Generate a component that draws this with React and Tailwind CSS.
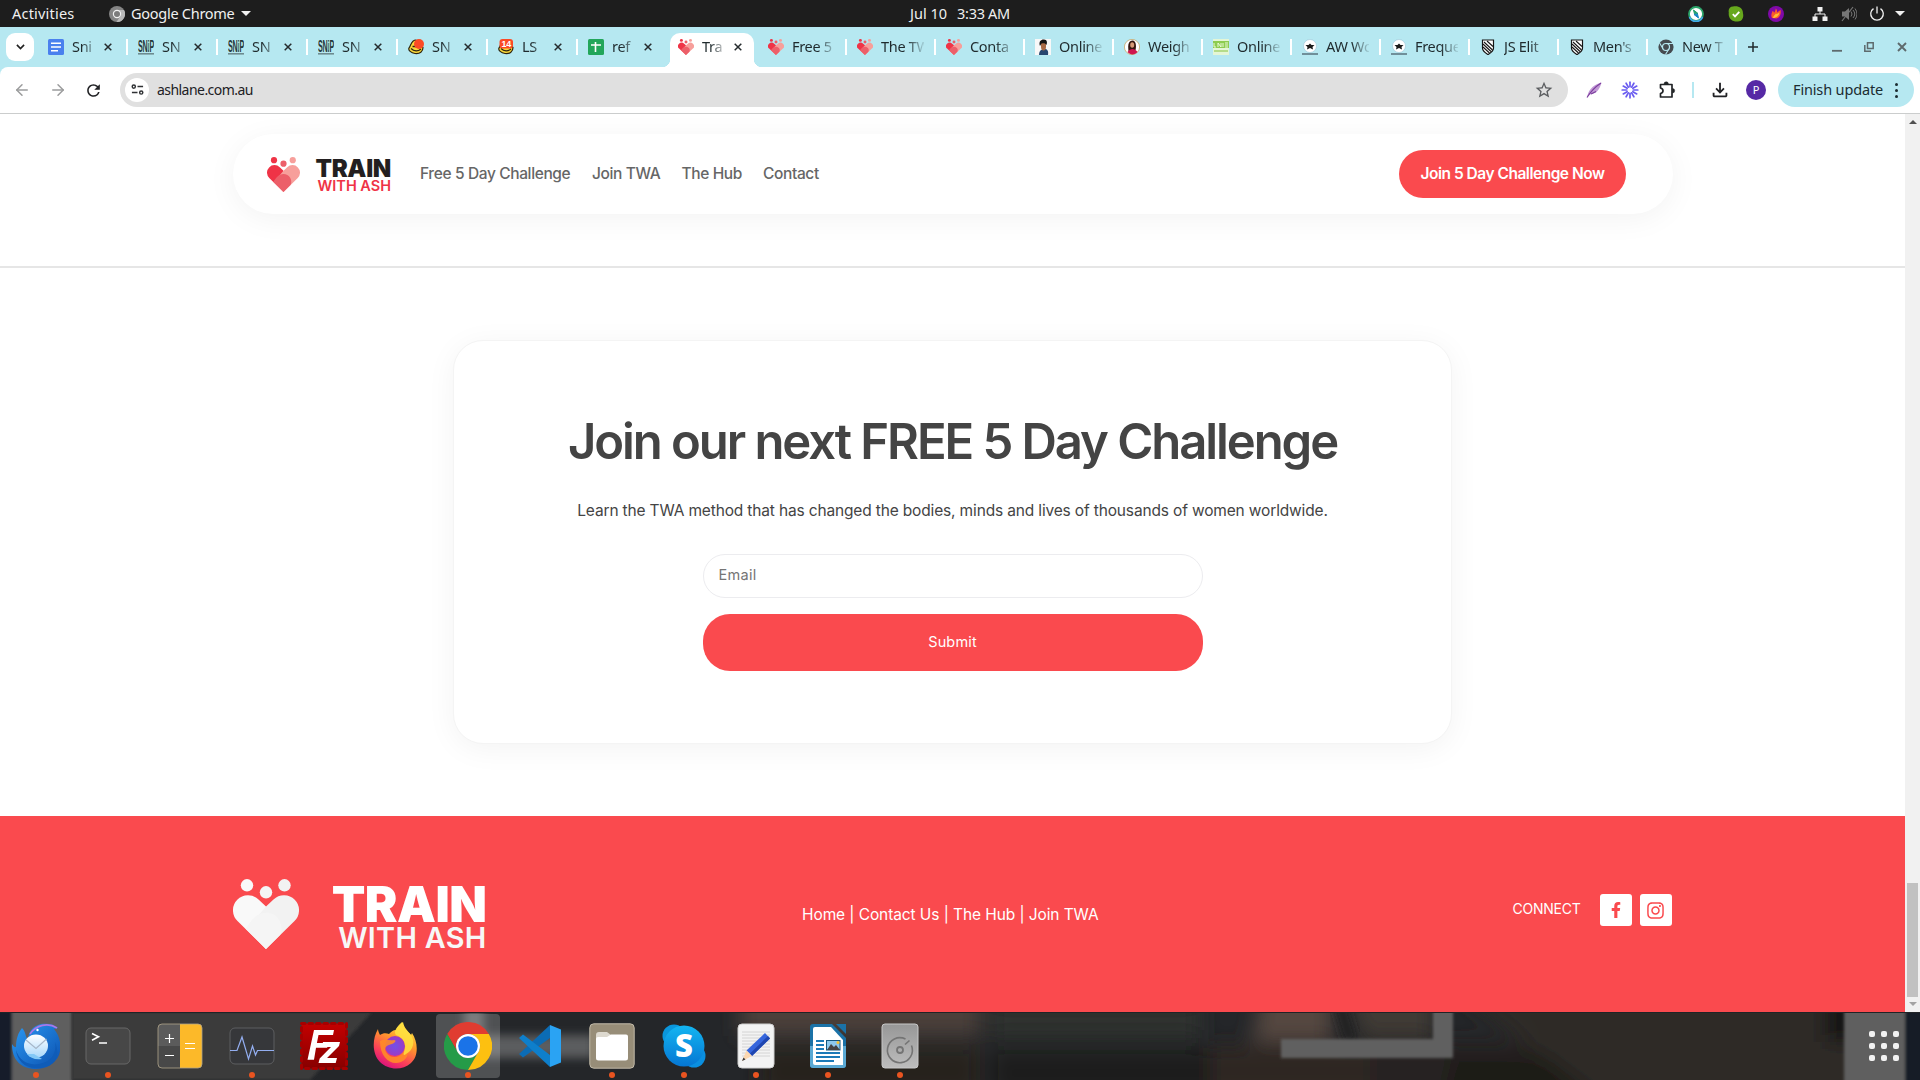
import React from "react";
import { LuArrowLeft, LuArrowRight } from "react-icons/lu";
import { MdRefresh, MdStarBorder, MdOutlineFileDownload } from "react-icons/md";
import { FaFacebookF, FaInstagram } from "react-icons/fa";

/* ---------- Small artwork ---------- */

function HeartLogo({ className, left = "#ef3346", right = "#f79f9b", mid = "#ec5f69" }) {
  return (
    <svg viewBox="0 0 66 70" preserveAspectRatio="none" className={className}>
      <circle cx="14" cy="6.3" r="6.2" fill={left} />
      <circle cx="33" cy="13.3" r="6.2" fill={mid} />
      <circle cx="51.5" cy="6.3" r="6.2" fill={right} />
      <path d="M33 27.5 25.500 20.500A15 15 0 0 0 4.500 42L33 70Z" fill={left} />
      <path d="M33 27.500 40.500 20.500A15 15 0 0 1 61.500 42L33 70 14 49.500Z" fill={right} />
      <path d="M33 70 12.500 49.500 19 41C27 31 41 32 46 41 50 48 48.500 53 47 56Z" fill={mid} />
    </svg>
  );
}

function DocsIcon() {
  return (
    <svg viewBox="0 0 16 16" className="size-4">
      <rect width="16" height="16" rx="1.500" fill="#4a80ee" />
      <path d="M3 4.300h10M3 8h10M3 11.700h7" stroke="#fff" strokeWidth="1.600" />
    </svg>
  );
}

function SheetsIcon() {
  return (
    <svg viewBox="0 0 16 16" className="size-4">
      <rect width="16" height="16" rx="1.500" fill="#22a65a" />
      <path d="M3 6h10M7.500 3v10" stroke="#fff" strokeWidth="1.600" />
    </svg>
  );
}

function SnipIcon() {
  return (
    <svg viewBox="0 0 16 16" className="size-4">
      <text x="0" y="12.500" textLength="16" lengthAdjust="spacingAndGlyphs" fontSize="16" fontWeight="700" fill="#26383a" fontFamily="Liberation Sans">SNiP</text>
      <path d="M0 14.800h16" stroke="#6d8b90" strokeWidth="1.600" />
      <path d="M10 2v9" stroke="#7fc9b4" strokeWidth=".8" />
    </svg>
  );
}

function Mailchimp({ badge }) {
  return (
    <svg viewBox="0 0 16 16" className="size-4">
      <path d="M8 1C3 1 3 7 1 9c-1 2 2 5 6 5.500 5 .6 8-2 8-6Z" fill="#f8d73a" stroke="#2c2410" strokeWidth="1.200" />
      <path d="M3 9.500c3 3 7 3 10 .5M4.500 7.500h5" stroke="#2c2410" strokeWidth="1.300" fill="none" />
      {badge ? (
        <>
          <rect x="1.500" y="0" width="13.500" height="9.500" rx="3" fill="#fb4a26" />
          <text x="8.200" y="8" textAnchor="middle" fontSize="9" fontWeight="700" fill="#fff" fontFamily="Liberation Sans">14</text>
        </>
      ) : (
        <circle cx="11" cy="5" r="5" fill="#fb4a26" />
      )}
    </svg>
  );
}

function PortraitIcon() {
  return (
    <svg viewBox="0 0 16 16" className="size-4">
      <rect width="16" height="16" fill="#f8f8f8" />
      <path d="M4 16c0-3 1-4.500 3-5.500l4-.5c2 1 2.500 3 2 6Z" fill="#27466f" />
      <path d="M6 4h5v4c0 2-1 3.500-2.500 3.500S6 10 6 8Z" fill="#a86a45" />
      <path d="M5 7C3 2 7 0 9 .5c3 0 3.500 3 2.500 5.500-1-2-3-2-5-1.500Z" fill="#151515" />
    </svg>
  );
}

function WomanIcon() {
  return (
    <svg viewBox="0 0 16 16" className="size-4">
      <circle cx="8" cy="8" r="7.600" fill="#fff" stroke="#c89c55" strokeWidth=".7" />
      <path d="M4.500 12C3.500 5 5 1.500 8.500 1.500S12.500 7 11.500 11Z" fill="#35170f" />
      <ellipse cx="8.200" cy="6" rx="2" ry="2.800" fill="#d79b77" />
      <path d="M3.500 13C6 9 11 9 13.500 13 11 16.200 6 16.200 3.500 13Z" fill="#cf164f" />
    </svg>
  );
}

function GreenIcon() {
  return (
    <svg viewBox="0 0 16 16" className="size-4">
      <rect width="16" height="16" fill="#e4f6d6" />
      <rect y="2" width="16" height="7" fill="#8dcc4f" />
      <path d="M1 4v4h2M5 8V4l3 4V4M10 4v4M12 4h3M12 6h3M12 8h3" stroke="#f3ffe4" strokeWidth=".9" fill="none" />
      <path d="M1 12h14" stroke="#b5dc8a" strokeWidth="2" />
    </svg>
  );
}

function AwIcon() {
  return (
    <svg viewBox="0 0 16 16" className="size-4">
      <circle cx="8" cy="7" r="6.500" fill="#fff" stroke="#9cc4d9" strokeWidth=".6" />
      <path d="M3.500 6 6.500 6 8 4.500l1.500 1.500h3L10.500 8l.5 2.500L8 9l-3 1.500.5-2.500Z" fill="#1a1a1a" />
      <path d="M0 15h16" stroke="#4b5f6b" strokeWidth="1.300" />
    </svg>
  );
}

function ShieldIcon() {
  return (
    <svg viewBox="0 0 16 16" className="size-4">
      <path d="M2.500 1h11v8c0 3.500-3 5-5.500 6.500C5.500 14 2.500 12.500 2.500 9Z" fill="#fff" stroke="#151515" strokeWidth="1.200" />
      <path d="m4 3 8.500 8M7 2l6 5.500M3 5l8 7.500M3 8l6.500 6" stroke="#151515" strokeWidth="1.100" />
    </svg>
  );
}

function ChromeMono({ className, fg = "#454b50", bg = "#b6e8f1" }) {
  return (
    <svg viewBox="0 0 16 16" className={className}>
      <circle cx="8" cy="8" r="7.600" fill={fg} />
      <circle cx="8" cy="8" r="3.500" fill={fg} stroke={bg} strokeWidth="1.200" />
      <path d="M8 4.500h7M5 9.800 1.600 4M11 9.800 7.500 15.500" stroke={bg} strokeWidth="1.100" />
    </svg>
  );
}

function TopBarChrome() {
  return (
    <svg viewBox="0 0 16 16" className="size-4">
      <circle cx="8" cy="8" r="8" fill="#858585" />
      <path d="M8 4h7a8 8 0 0 1-7.500 12L11.500 10Z" fill="#b9b9b9" />
      <circle cx="8" cy="8" r="3.600" fill="#7c7c7c" stroke="#f2f2f2" strokeWidth="1.200" />
    </svg>
  );
}

function Burst() {
  const rays = [0, 30, 60, 90, 120, 150, 180, 210, 240, 270, 300, 330];
  return (
    <svg viewBox="0 0 18 18" className="size-[18px]">
      {rays.map((r) => (
        <path key={r} d="M9 1.200v4.500" stroke="#6a5cf0" strokeWidth="1.700" strokeLinecap="round" transform={`rotate(${r} 9 9)`} />
      ))}
    </svg>
  );
}

function Feather() {
  return (
    <svg viewBox="0 0 16 16" className="size-4">
      <path d="M1 15.500C2 10 5 3 15.500.5 14 7 10.500 12 4 12.500Z" fill="#c29ad6" />
      <path d="M1 15.500C5 9 9 5 15 1M5 12l5-2.500" stroke="#7a3c9c" strokeWidth="1.100" fill="none" />
    </svg>
  );
}

function Caret() {
  return <span className="h-0 w-0 border-x-[5px] border-t-[5px] border-x-transparent border-t-[#f0f0f0]" />;
}

/* ---------- Desktop top bar ---------- */

function TopBar() {
  return (
    <header className="relative flex h-[27px] items-center bg-[#1d1d1d] pl-3 font-['Noto_Sans',sans-serif] text-[14.500px] text-[#f0f0f0]">
      <span className="w-[97px] tracking-[0.200px]">Activities</span>
      <TopBarChrome />
      <span className="ml-[6px] mr-[6px] tracking-[-0.270px]">Google Chrome</span>
      <Caret />
      <div className="absolute inset-x-0 flex justify-center gap-[10px]">
        <span>Jul 10</span>
        <span className="tracking-[-0.300px]">3:33 AM</span>
      </div>
      <div className="ml-auto flex items-center pr-[15px]">
        <svg viewBox="0 0 16 16" className="mr-6 size-4">
          <circle cx="8" cy="8" r="7" fill="#fff" stroke="#2ba56a" strokeWidth="1.800" />
          <path d="M1.500 11A7 7 0 0 0 14.500 11" stroke="#42a7e8" strokeWidth="1.800" fill="none" />
          <path d="m5.500 4 4.500 3.500-3.500.5Z" fill="#23a06c" stroke="#23a06c" />
          <path d="M10.500 12 6 8.500 9.500 8Z" fill="#1685c4" stroke="#1685c4" />
        </svg>
        <svg viewBox="0 0 16 16" className="mr-6 size-4">
          <path d="M5 .5c5-1 10 1 10 7 1 4-1 8-5 8C4 16 0 12 .8 6.500 0 3 2 .5 5 .5Z" fill="#67a81d" />
          <path d="m4.800 8.200 2.200 2.200 4.300-4.600" stroke="#fff" strokeWidth="1.800" fill="none" />
        </svg>
        <svg viewBox="0 0 16 16" className="mr-[28px] size-4">
          <circle cx="8" cy="8" r="8" fill="#8009a8" />
          <path d="M4 12C2.500 9 4 7 4.500 5c1 0 1.500 1 1.500 2 1-1 1.500-3 1.800-4.500C9.500 4 9 5.500 9 6.500L12.500 4c1 4-1 8-4 8.500Z" fill="#fb5a2c" />
          <path d="M5 12c0-2 2-3 3-4.500.5 1 2 0 3.500-1-.5 3-3 5.500-6.500 5.500Z" fill="#ffc02f" />
        </svg>
        <svg viewBox="0 0 16 16" className="mr-[13px] size-4" fill="#f0f0f0">
          <path d="M5.500 1h5v4.500h-5zM.5 10.500h5V15h-5zM10.500 10.500h5V15h-5z" />
          <path d="M8 5v3M3 11V8h10v3" stroke="#f0f0f0" fill="none" />
        </svg>
        <svg viewBox="0 0 16 16" className="mr-[12px] size-4">
          <path d="M1 5.500h3L8 2v12L4 10.500H1Z" fill="#777" />
          <path d="M10 5.500q2 2.500 0 5M12 4q3.500 4 0 8M14 2.500q4 5.500 0 11" stroke="#777" fill="none" />
          <path d="M1 15 12 1" stroke="#777" strokeWidth="1.200" />
        </svg>
        <svg viewBox="0 0 16 16" className="mr-[10px] size-4" fill="none" stroke="#f0f0f0" strokeWidth="1.300">
          <path d="M4.500 2.600a6.300 6.300 0 1 0 7 0M8 .5v7" />
        </svg>
        <Caret />
      </div>
    </header>
  );
}

/* ---------- Browser tabs ---------- */

const heart = <HeartLogo className="size-4" />;

const pinnedTabs = [
  { title: "Sni", icon: <DocsIcon /> },
  { title: "SN", icon: <SnipIcon /> },
  { title: "SN", icon: <SnipIcon /> },
  { title: "SN", icon: <SnipIcon /> },
  { title: "SN", icon: <Mailchimp /> },
  { title: "LS", icon: <Mailchimp badge /> },
  { title: "ref", icon: <SheetsIcon /> },
];

const otherTabs = [
  { title: "Free 5", icon: heart },
  { title: "The TW", icon: heart },
  { title: "Conta", icon: heart },
  { title: "Online", icon: <PortraitIcon /> },
  { title: "Weigh", icon: <WomanIcon /> },
  { title: "Online", icon: <GreenIcon /> },
  { title: "AW Wo", icon: <AwIcon /> },
  { title: "Freque", icon: <AwIcon /> },
  { title: "JS Elit", icon: <ShieldIcon /> },
  { title: "Men's", icon: <ShieldIcon /> },
  { title: "New T", icon: <ChromeMono className="size-4" /> },
];

function CloseX() {
  return (
    <svg viewBox="0 0 8 8" className="size-2 shrink-0">
      <path d="m.7.7 6.600 6.600M7.300.7.7 7.300" stroke="#252b2d" strokeWidth="1.500" />
    </svg>
  );
}

function PinnedTab({ tab, last }) {
  return (
    <div className="flex h-10 w-[90px] shrink-0 items-center pl-[10px]">
      {tab.icon}
      <span className="ml-2 w-[21px] shrink-0 overflow-hidden [mask-image:linear-gradient(to_right,#000_45%,transparent_130%)] whitespace-nowrap">{tab.title}</span>
      <span className="ml-[11px] flex"><CloseX /></span>
      {!last && <span className="ml-[14px] h-4 w-[2px] bg-white" />}
    </div>
  );
}

function ActiveTab() {
  return (
    <div className="flex h-10 w-[90px] shrink-0 items-end">
      <div className="relative ml-[2px] flex h-[34px] w-[84px] items-center rounded-t-[10px] bg-white pb-[6px] pl-2">
        <span className="absolute bottom-0 -left-2 size-2 bg-[radial-gradient(circle_at_0_0,transparent_8px,white_8.500px)]" />
        <span className="absolute -right-2 bottom-0 size-2 bg-[radial-gradient(circle_at_100%_0,transparent_8px,white_8.500px)]" />
        {heart}
        <span className="ml-2 w-[21px] overflow-hidden [mask-image:linear-gradient(to_right,#000_40%,transparent_120%)] whitespace-nowrap">Tra</span>
        <span className="ml-[11px] flex"><CloseX /></span>
      </div>
    </div>
  );
}

function TabStrip() {
  return (
    <div className="flex h-10 items-center bg-[#b6e8f1] pl-[6px] font-['Noto_Sans',sans-serif] text-[14.500px] tracking-[-0.300px] text-[#1f2a2d]">
      <div className="mr-1 flex h-7 w-7 items-center justify-center rounded-[9px] bg-white">
        <svg viewBox="0 0 10 6" className="w-[9px]"><path d="m1 1 4 4 4-4" stroke="#202020" strokeWidth="1.800" fill="none" /></svg>
      </div>
      {pinnedTabs.map((t, i) => <PinnedTab key={i} tab={t} last={i === 6} />)}
      <ActiveTab />
      {otherTabs.map((t, i) => (
        <div key={i} className="flex h-10 w-[89px] shrink-0 items-center pl-[10px]">
          {t.icon}
          <span className="ml-2 w-[43px] shrink-0 overflow-hidden [mask-image:linear-gradient(to_right,#000_60%,transparent_105%)] whitespace-nowrap">{t.title}</span>
          <span className="ml-[10px] h-4 w-[2px] bg-white" />
        </div>
      ))}
      <svg viewBox="0 0 10 10" className="ml-[11px] size-[10px]"><path d="M5 0v10M0 5h10" stroke="#202a2c" strokeWidth="1.500" /></svg>
      <div className="ml-auto flex items-center pr-[13px] text-[#5e6a6d]">
        <svg viewBox="0 0 10 10" className="mr-[22px] size-[10px]"><path d="M0 8.800h10" stroke="currentColor" strokeWidth="1.800" /></svg>
        <svg viewBox="0 0 10 10" className="mr-[23px] size-[10px]" fill="none" stroke="currentColor" strokeWidth="1.500"><path d="M3.500.8h5.700v5.700H3.500zM.8 3v6.200H7" /></svg>
        <svg viewBox="0 0 10 10" className="size-[10px]"><path d="m1 1 8 8M9 1 1 9" stroke="currentColor" strokeWidth="1.900" /></svg>
      </div>
    </div>
  );
}

function Toolbar() {
  return (
    <div className="bg-[#b6e8f1]">
      <div className="flex h-[47px] items-center rounded-t-lg border-b border-[#cbcdcd] bg-white pl-[14px] font-['Noto_Sans',sans-serif] text-[#202124]">
        <LuArrowLeft className="size-[18px] -translate-x-px text-[#9b9c9d]" />
        <LuArrowRight className="ml-[17px] size-[18px] text-[#9b9c9d]" />
        <MdRefresh className="ml-[17px] size-[19px]" />
        <div className="ml-[17px] flex h-[34px] w-[1448px] items-center rounded-full bg-[#e0e0e0] pr-[15px] pl-[5px]">
          <span className="flex size-6 items-center justify-center rounded-full bg-white">
            <svg viewBox="0 0 14 12" className="w-[13px]" fill="none" stroke="#303235" strokeWidth="1.600">
              <circle cx="3" cy="2.800" r="1.700" /><path d="M7 2.800h6M1 9.200h6" /><circle cx="11" cy="9.200" r="1.700" />
            </svg>
          </span>
          <span className="mb-px ml-2 text-[14px] leading-[18px] tracking-[-0.550px]">ashlane.com.au</span>
          <MdStarBorder className="ml-auto size-5 -mr-px text-[#5b5d60]" />
        </div>
        <span className="ml-[18px]"><Feather /></span>
        <span className="ml-[19px]"><Burst /></span>
        <svg viewBox="0 0 18 18" className="ml-[19px] size-[18px]" fill="none" stroke="#222427" strokeWidth="1.700">
          <path d="M2.500 3.500H14V16H2.500v-3.500q2.500-.5 2.500-2.700T2.500 7Z" strokeLinejoin="round" />
          <path d="M6 3a2.200 2.200 0 0 1 4.400 0ZM14.500 7.500a2.200 2.200 0 0 1 0 4.400Z" fill="#222427" strokeWidth=".5" />
        </svg>
        <span className="ml-[16px] h-4 w-[2px] bg-[#b6e8f1]" />
        <MdOutlineFileDownload className="ml-[15px] size-[22px]" />
        <span className="ml-[15px] flex size-5 items-center justify-center rounded-full bg-[#5629a5] text-[11px] text-white">P</span>
        <div className="ml-3 flex h-[34px] w-[136px] items-center rounded-full bg-[#b6e8f1] pl-[15px] text-[14.500px] tracking-[-0.150px] text-[#1b2c31]">
          Finish update
          <span className="ml-[12px] flex flex-col gap-[3px]">
            {[0, 1, 2].map((i) => <span key={i} className="size-[3px] rounded-full bg-[#1b2c31]" />)}
          </span>
        </div>
      </div>
    </div>
  );
}

/* ---------- Web page ---------- */

function SiteNav() {
  return (
    <nav className="mx-auto mt-5 flex h-20 w-[1440px] items-center rounded-full bg-white pr-[46.500px] pl-[34.500px] text-[15.500px] font-medium tracking-[-0.370px] text-[#666] shadow-[0_5px_30px_rgba(0,0,0,0.05)]">
      <HeartLogo className="h-[35px] w-[33px]" />
      <div className="ml-[15px] flex w-[76px] flex-col items-end whitespace-nowrap">
        <span className="h-[21px] text-[24px] leading-[24px] font-black tracking-[-0.300px] text-[#231f20]">TRAIN</span>
        <span className="h-[14px] text-[14.500px] leading-[15px] font-semibold tracking-[0px] text-[#ef3346]">WITH ASH</span>
      </div>
      <span className="ml-[29px] w-[172px]">Free 5 Day Challenge</span>
      <span className="w-[89.500px]">Join TWA</span>
      <span className="w-[81.500px]">The Hub</span>
      <span>Contact</span>
      <button className="ml-auto h-12 w-[227px] rounded-[24px] bg-[#fa4a4e] font-semibold tracking-[-0.490px] text-white">Join 5 Day Challenge Now</button>
    </nav>
  );
}

function SignupCard() {
  return (
    <section className="mx-auto mt-[72px] flex h-[404px] w-[999px] flex-col items-center rounded-[30px] border border-[#f4f4f4] bg-white pt-[71px] text-[#444] shadow-[0_5px_30px_rgba(0,0,0,0.05)]">
      <h1 className="h-[58px] text-[49px] leading-[59px] font-semibold tracking-[-2.060px] whitespace-nowrap">Join our next FREE 5 Day Challenge</h1>
      <p className="mt-[29px] h-6 text-[15.500px] leading-6 tracking-[-0.155px] whitespace-nowrap">
        Learn the TWA method that has changed the bodies, minds and lives of thousands of women worldwide.
      </p>
      <div className="mt-[31px] flex h-[44px] w-[500px] items-center rounded-full border border-[#ececef] pb-[3px] pl-[15px] text-[14.500px] tracking-[0.300px] text-[#757575]">Email</div>
      <button className="mt-4 h-[57px] w-[500px] rounded-[27px] bg-[#fa4a4e] pb-px text-[14.500px] tracking-[0.150px] text-white">Submit</button>
    </section>
  );
}

function Footer() {
  return (
    <footer className="mt-[72px] h-[196px] bg-[#fa4a4e] text-white">
      <div className="mx-auto flex w-[1440px]">
        <HeartLogo className="mt-[62.500px] h-[70px] w-[66px]" left="#f9f9f9" right="#f2f2f2" mid="#f5f5f5" />
        <div className="mt-[68px] ml-[32px] flex w-[156px] flex-col items-end whitespace-nowrap">
          <span className="h-[40px] text-[49px] leading-[41px] font-black tracking-[-0.500px]">TRAIN</span>
          <span className="h-[28px] text-[28.800px] leading-[27px] font-semibold tracking-[0.300px] text-[#f7f7f7]">WITH ASH</span>
        </div>
        <p className="mt-[87px] ml-[315.500px] w-[710.500px] text-[15.500px] leading-6 tracking-[-0.090px]">Home | Contact Us | The Hub | Join TWA</p>
        <span className="mt-[81px] w-[87px] text-[14px] leading-6 tracking-[-0.250px]">CONNECT</span>
        <span className="mt-[78px] flex size-8 shrink-0 items-center justify-center rounded-[3px] bg-white text-[#fa4a4e]"><FaFacebookF className="size-[16px]" /></span>
        <span className="mt-[78px] ml-2 flex size-8 shrink-0 items-center justify-center rounded-[3px] bg-white text-[#fa4a4e]"><FaInstagram className="size-[19px]" /></span>
      </div>
    </footer>
  );
}

function ScrollBar() {
  return (
    <div className="flex w-[15px] flex-col items-center bg-[#f1f1f1]">
      <span className="mt-[6px] border-x-[4px] border-b-[4px] border-x-transparent border-b-[#505050]" />
      <span className="mt-[759px] h-[114px] w-[11px] bg-[#c1c1c1]" />
      <span className="mt-[5px] border-x-[4px] border-t-[4px] border-x-transparent border-t-[#a3a3a3]" />
    </div>
  );
}

/* ---------- Dock icons ---------- */

function Thunderbird() {
  return (
    <svg viewBox="0 0 48 48" className="size-12">
      <defs>
        <linearGradient id="tb" x1="0" y1="0" x2="1" y2="1"><stop offset="0" stopColor="#2b9bf4" /><stop offset="1" stopColor="#0b4fae" /></linearGradient>
        <linearGradient id="env" x1="0" y1="0" x2="0" y2="1"><stop offset="0" stopColor="#fff" /><stop offset="1" stopColor="#a9d8fb" /></linearGradient>
      </defs>
      <path d="M10 6c4 4 3 8 6 12 0-8 5-14 13-16 7-1 13 0 17 4l-4 1c6 7 8 17 5 26-4 9-13 14-23 14C9 47 0 38 0 22c2 3 3 3 4 3 0-8 2-14 6-19Z" fill="url(#tb)" />
      <path d="M18 12C24 3 36 0 45 6" fill="none" stroke="#a978e8" strokeWidth="1.600" />
      <path d="M4 28c3 10 12 16 23 14C40 40 45 30 43 20 50 36 40 47 24 46 12 46 5 38 4 28Z" fill="#0f5cb8" />
      <ellipse cx="24" cy="24" rx="12" ry="11.500" fill="url(#env)" />
      <path d="m14 18 10 8.500L34.500 17" fill="none" stroke="#a6b6c8" strokeWidth="1.100" />
      <path d="M15 32c3 4 8 6 15 5l-8-5Z" fill="#82c8f7" />
      <circle cx="25.500" cy="8" r="1.200" fill="#fff" />
    </svg>
  );
}

function Terminal() {
  return (
    <svg viewBox="0 0 46 38" className="h-[38px] w-[46px]">
      <rect x="1" y="1" width="44" height="36" rx="5" fill="#474747" stroke="#686868" />
      <path d="m7 6.500 6.500 3.300-6.500 3.400M14 16h8" stroke="#fff" strokeWidth="1.600" fill="none" />
    </svg>
  );
}

function Calculator() {
  return (
    <svg viewBox="0 0 46 46" className="size-[46px]">
      <rect x="1" y="1" width="44" height="44" rx="4" fill="#5b5b5b" />
      <path d="M1 23h22v22H5a4 4 0 0 1-4-4Z" fill="#484848" />
      <path d="M23 1h18a4 4 0 0 1 4 4v36a4 4 0 0 1-4 4H23Z" fill="#fcb929" />
      <rect x="1" y="1" width="44" height="44" rx="4" fill="none" stroke="#b0a58a" strokeWidth=".8" />
      <path d="M8 15.500h9M12.500 11v9M8 32.500h9M28 20.500h10M28 25.500h10" stroke="#fff" strokeWidth="1.200" />
    </svg>
  );
}

function Monitor() {
  return (
    <svg viewBox="0 0 46 38" className="h-[38px] w-[46px]">
      <rect x="1" y="1" width="44" height="36" rx="5" fill="#36373a" stroke="#5d5e60" />
      <path d="M1 23.500h7l5-13.500 6.500 22 4-13 3 9 2-4.500H45" fill="none" stroke="#93aef0" strokeWidth="1.200" />
    </svg>
  );
}

function FileZilla() {
  return (
    <svg viewBox="0 0 48 48" className="size-12">
      <defs><linearGradient id="fz" x1="0" y1="0" x2="0" y2="1"><stop offset="0" stopColor="#c40000" /><stop offset="1" stopColor="#870000" /></linearGradient></defs>
      <rect x="1.500" y="1.500" width="45" height="45" fill="url(#fz)" />
      <rect x="1.500" y="1.500" width="45" height="45" fill="none" stroke="#a50000" strokeWidth="3" strokeDasharray="3.500 4" strokeLinecap="round" />
      <path d="M14 8h20l-1 5H18.500l-1.600 8H28l-.8 4.800H16l-2 12H7.500Z" fill="#fff" />
      <path d="M23 20h17l-1 4-12 12h10l-1.300 5H18.500l1.200-4.500L31 25h-9Z" fill="#fff" />
    </svg>
  );
}

function Firefox() {
  return (
    <svg viewBox="0 0 48 48" className="size-12">
      <defs>
        <linearGradient id="ff" x1=".8" y1="0" x2=".3" y2="1"><stop offset="0" stopColor="#fff14a" /><stop offset=".4" stopColor="#ff9a2a" /><stop offset=".75" stopColor="#fb3d5a" /><stop offset="1" stopColor="#d7107f" /></linearGradient>
        <radialGradient id="ffp"><stop offset="0" stopColor="#7250e8" /><stop offset="1" stopColor="#9c3bc4" /></radialGradient>
      </defs>
      <path d="M6 7c0 2 1 4 2 6 3-2 6-2 9-1 2-2 4-4 7-4 1-3 4-6 7-8 1 6 5 9 8 13l1-2c6 9 7 23-1 30-9 8-23 7-31-1C0 32 0 17 6 7Z" fill="url(#ff)" />
      <circle cx="23" cy="24" r="10" fill="url(#ffp)" />
      <path d="M8 19c5-3 9 0 14-1 3 0 1 3-2 4-3 1-6 1-7 5 1 6 8 10 14 7 5-2 8-8 5-13 6 6 5 16-3 19-10 4-21-4-21-21Z" fill="#ff8b28" opacity=".9" />
      <path d="M30 0c-5 5-9 9-6 13 8 3 11 9 8 17-1 3 0 4 2 2 8-4 9-13 5-19-4-5-8-7-9-13Z" fill="#ffe23f" opacity=".85" />
    </svg>
  );
}

function Chrome() {
  return (
    <svg viewBox="0 0 48 48" className="size-12">
      <path d="M3.200 12A24 24 0 0 1 44.800 12H24a12 12 0 0 0-10.400 18Z" fill="#e03c31" />
      <path d="M3.200 12 13.600 30a12 12 0 0 0 20.800 0L24 48A24 24 0 0 1 3.200 12Z" fill="#259b48" />
      <path d="M24 12h20.800A24 24 0 0 1 24 48l10.400-18A12 12 0 0 0 24 12Z" fill="#fdc010" />
      <circle cx="24" cy="24" r="12" fill="#fff" />
      <circle cx="24" cy="24" r="9.800" fill="#1a73e8" />
    </svg>
  );
}

function VsCode() {
  return (
    <svg viewBox="0 0 44 44" className="size-[44px]">
      <path d="M1 30 5 33.500 32 14V1Z" fill="#0b6cb5" />
      <path d="M1 14 5 10.500 32 31v12Z" fill="#0e7fcb" />
      <path d="M32 1 43 5.500v33L32 43Z" fill="#2aa3f3" />
    </svg>
  );
}

function Files() {
  return (
    <svg viewBox="0 0 46 46" className="size-[46px]">
      <rect x=".8" y=".8" width="44.400" height="44.400" rx="4" fill="#978d78" stroke="#c0b9a8" />
      <path d="M7 12a3 3 0 0 1 3-3h8l4 3h14v8H7Z" fill="#ddd9cf" />
      <path d="M7 16q0-2 2-2h9l4-2.500h15q2 0 2 2V35q0 2.500-2.500 2.500h-27Q7 37.500 7 35Z" fill="#fff" />
    </svg>
  );
}

function Skype() {
  return (
    <svg viewBox="0 0 44 44" className="size-[44px]">
      <defs><linearGradient id="sk" x1="0" y1="0" x2="0" y2="1"><stop offset="0" stopColor="#13b5f1" /><stop offset="1" stopColor="#0576d3" /></linearGradient></defs>
      <circle cx="12" cy="12" r="11.500" fill="#0a96dc" />
      <circle cx="32" cy="32" r="11.500" fill="#0a8fe0" />
      <circle cx="22" cy="22" r="20.500" fill="url(#sk)" />
      <text x="22" y="32.500" textAnchor="middle" fontSize="31" fontWeight="800" fill="#fff" fontFamily="Open Sans">S</text>
    </svg>
  );
}

function Editor() {
  return (
    <svg viewBox="0 0 38 46" className="h-[46px] w-[38px]">
      <rect x="1" y="1" width="36" height="44" rx="4" fill="#f3f3f3" stroke="#d0d0d0" />
      <path d="M5 9h28M5 12h28M5 15h28M5 18h28M5 21h28M5 24h28M5 27h28M5 30h28M5 33h28" stroke="#ccc" strokeWidth=".8" />
      <path d="M28 10 33 15.500 15 33l-5.500-5.500Z" fill="#3565dc" />
      <path d="m31 13 2 2.500L15 33l-2-2.500Z" fill="#1f46b0" />
      <path d="M9.500 27.500 15 33 5 38Z" fill="#fbd7b0" />
      <path d="m6.500 34.500 2 2L5 38Z" fill="#3a3a3a" />
    </svg>
  );
}

function Writer() {
  return (
    <svg viewBox="0 0 38 46" className="h-[46px] w-[38px]">
      <path d="M4 1h19l14 14v27q0 3-3 3H4q-3 0-3-3V4q0-3 3-3Z" fill="#1b72a7" />
      <path d="M1 23h36v19q0 3-3 3H4q-3 0-3-3Z" fill="#5aa9d4" />
      <path d="M6 4h16l12 13v25H6q-2 0-2-2V6q0-2 2-2Z" fill="#fff" />
      <path d="M27 1h10v10Z" fill="#1b72a7" />
      <path d="M7 18h8M7 22h8M7 26h8M7 30h24M7 34h24M7 38h18" stroke="#1c7ab8" strokeWidth="1.900" />
      <rect x="17.500" y="17.500" width="13.500" height="9.500" fill="#8cc9ee" stroke="#15587f" />
      <path d="m18 27 4-6 3 3 2-2 4 5Z" fill="#444" /><circle cx="29" cy="19.500" r="1.500" fill="#f6c431" />
    </svg>
  );
}

function Disks() {
  return (
    <svg viewBox="0 0 38 46" className="h-[46px] w-[38px]">
      <defs><linearGradient id="dk" x1="0" y1="0" x2="0" y2="1"><stop offset="0" stopColor="#979797" /><stop offset="1" stopColor="#bdbdbd" /></linearGradient></defs>
      <rect x="1" y="1" width="36" height="44" rx="3" fill="url(#dk)" stroke="#c8c8c8" />
      <path d="M24.500 16a12.500 12.500 0 1 0 6 6.500M24 21.500l4.500-4" fill="none" stroke="#747474" strokeWidth="1.600" />
      <circle cx="19" cy="27" r="3" fill="none" stroke="#747474" strokeWidth="1.800" />
    </svg>
  );
}

const dockApps = [
  { icon: <Thunderbird />, running: true },
  { icon: <Terminal />, running: true },
  { icon: <Calculator /> },
  { icon: <Monitor />, running: true },
  { icon: <FileZilla /> },
  { icon: <Firefox /> },
  { icon: <Chrome />, running: true, active: true },
  { icon: <VsCode /> },
  { icon: <Files />, running: true },
  { icon: <Skype />, running: true },
  { icon: <Editor />, running: true },
  { icon: <Writer />, running: true },
  { icon: <Disks />, running: true },
];

/* Blurred desktop wallpaper visible behind the translucent dock. */
function Wallpaper() {
  return (
    <svg viewBox="0 0 1920 68" className="absolute inset-0 h-[68px] w-[1920px]">
      <defs>
        <filter id="b2" x="-10%" y="-30%" width="120%" height="160%"><feGaussianBlur stdDeviation="1.500" /></filter>
        <filter id="b5" x="-10%" y="-80%" width="120%" height="260%"><feGaussianBlur stdDeviation="5" /></filter>
        <filter id="b8" x="-30%" y="-80%" width="160%" height="260%"><feGaussianBlur stdDeviation="10" /></filter>
      </defs>
      <rect width="1920" height="68" fill="#242629" />
      <g filter="url(#b8)">
        <rect x="740" y="-20" width="240" height="44" fill="#4c403a" />
        <path d="M760 34h220v50H760z" fill="#27221f" />
        <rect x="990" y="-10" width="210" height="36" fill="#2f302e" />
        <rect x="990" y="36" width="230" height="50" fill="#1c1c1c" />
        <path d="M1210 34h170v50h-170z" fill="#2e2824" />
        <path d="M1370 30h600v60h-600z" fill="#262421" />
        <path d="M1455-20h400v100h-260Z" fill="#2f2c27" />
        <path d="M1453 44h90l50 40h-150z" fill="#1b1a19" />
        <rect x="1825" y="-20" width="40" height="50" fill="#171614" />
        <path d="M1262-20h70v50h-80z" fill="#55473f" />
        <path d="M1345-20h88v46h-70z" fill="#403a36" />
      </g>
      <path d="M1333-10h12l12 40h-12z" fill="#232322" filter="url(#b5)" />
      <g filter="url(#b2)">
        <path d="M-5-5h17v78H-5z" fill="#141f29" />
        <path d="M12-5h60v78H12z" fill="#5f5f5f" />
        <path d="M1433-5h20v51h-172V27h152z" fill="#606060" />
        <path d="M1844-5h61v78h-61z" fill="#5f5f5f" />
        <path d="M1905-5h20v78h-20z" fill="#151b27" />
      </g>
      <path d="M72 0h300L310 68H72z" fill="#3a3a3a" filter="url(#b2)" />
      <path d="M464-5h20v28h110v23H464z" fill="#5c5d5e" filter="url(#b5)" />
      <rect width="1920" height="1" fill="#202326" />
    </svg>
  );
}

function Dock() {
  return (
    <div className="relative h-[68px] overflow-hidden bg-[#242629]">
      <Wallpaper />
      <div className="relative flex h-full items-start">
        {dockApps.map((a, i) => (
          <div key={i} className="flex h-full w-[72px] flex-col items-center pt-[2px]">
            <div className={a.active ? "flex h-16 w-16 flex-col items-center rounded-[4px] bg-white/20" : "flex h-16 w-16 flex-col items-center"}>
              <span className="mt-2 flex h-12 items-center">{a.icon}</span>
              {a.running && <span className="mt-[2px] size-[6px] rounded-full bg-[#e95420]" />}
            </div>
          </div>
        ))}
        <div className="mt-[19px] mr-[21px] ml-auto grid grid-cols-3 gap-[6px]">
          {[...Array(9)].map((_, i) => <span key={i} className="size-[6px] rounded-[2px] bg-[#f2f2f2]" />)}
        </div>
      </div>
    </div>
  );
}

export default function App() {
  return (
    <div className="flex h-[1080px] w-[1920px] flex-col overflow-hidden bg-white">
      <TopBar />
      <TabStrip />
      <Toolbar />
      <div className="flex h-[898px]">
        <main className="flex w-[1905px] flex-col font-['Inter',sans-serif]">
          <SiteNav />
          <hr className="mt-[52px] border-t-2 border-[#e6e6e6]" />
          <SignupCard />
          <Footer />
        </main>
        <ScrollBar />
      </div>
      <Dock />
    </div>
  );
}
